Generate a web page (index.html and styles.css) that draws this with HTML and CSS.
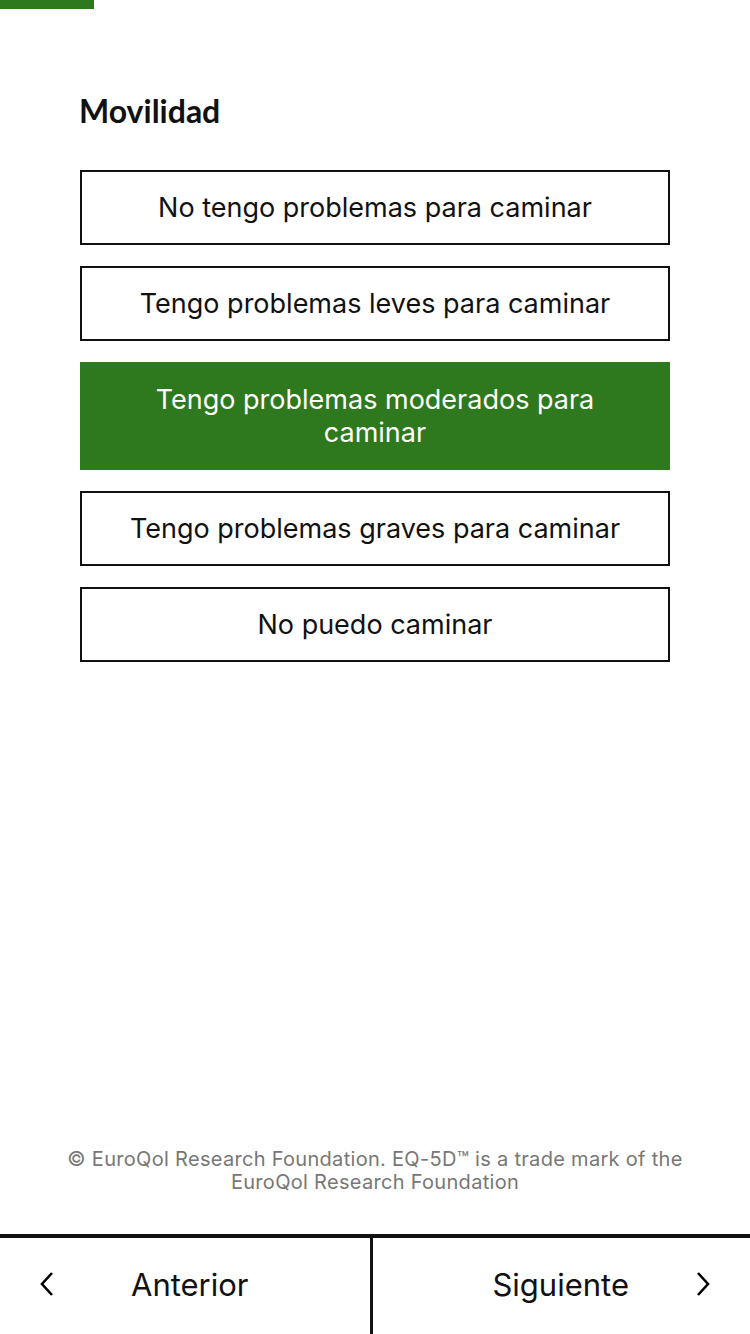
FILE: index.html
```html
<!DOCTYPE html>
<html lang="es">
<head>
    <meta charset="UTF-8">
    <meta name="viewport" content="width=device-width, initial-scale=1.0">
    <title>Movilidad</title>

    <link rel="stylesheet" href="styles.css">
</head>
<body>
    <div class="page">
        <div class="progress"></div>

        <div class="question">
            <h1 class="title">Movilidad</h1>
            <ul class="options">
                <li class="option">No tengo problemas para caminar</li>
                <li class="option">Tengo problemas leves para caminar</li>
                <li class="option selected">Tengo problemas moderados para caminar</li>
                <li class="option">Tengo problemas graves para caminar</li>
                <li class="option">No puedo caminar</li>
            </ul>
        </div>

        <p class="copyright">© EuroQol Research Foundation. EQ-5D™ is a trade mark of the EuroQol Research Foundation</p>

        <nav class="nav">
            <div class="nav-btn prev">
                <svg class="chevron" width="14" height="26" viewBox="0 0 14 26"><path d="M12 2 L2 13 L12 24" fill="none" stroke="#000" stroke-width="2.6"/></svg>
                <span>Anterior</span>
            </div>
            <div class="nav-btn next">
                <span>Siguiente</span>
                <svg class="chevron" width="14" height="26" viewBox="0 0 14 26"><path d="M2 2 L12 13 L2 24" fill="none" stroke="#000" stroke-width="2.6"/></svg>
            </div>
        </nav>
    </div>
</body>
</html>
```

FILE: styles.css
```css
* {
    margin: 0;
    padding: 0;
    box-sizing: border-box;
}

body {
    font-family: Inter, Roboto, "Liberation Sans", sans-serif;
    color: #111;
    background: #fff;
}

.page {
    width: 750px;
    height: 1334px;
    display: flex;
    flex-direction: column;
}

.progress {
    width: 94px;
    height: 9px;
    background-color: #2e781d;
}

.question {
    flex: 1;
    padding: 82px 80px 0 80px;
}

.question .title {
    font-family: Lato, "Liberation Sans", sans-serif;
    font-weight: bold;
    font-size: 32px;
    line-height: 40px;
    margin-left: -1px;
    margin-bottom: 39px;
}

.options {
    list-style: none;
    display: flex;
    flex-direction: column;
    gap: 21px;
}

.options .option {
    border: 2px solid #111;
    min-height: 75px;
    display: flex;
    align-items: center;
    justify-content: center;
    text-align: center;
    font-size: 27px;
    line-height: 33px;
    padding: 19px 22px;
}

.options .selected {
    background-color: #2e781d;
    border-color: #2e781d;
    color: #fff;
}

.copyright {
    text-align: center;
    font-size: 20px;
    line-height: 23px;
    color: #777;
    padding: 0 50px;
    margin-bottom: 40px;
    letter-spacing: 0.3px;
}

.nav {
    height: 100px;
    border-top: 4px solid #111;
    display: flex;
}

.nav .nav-btn {
    display: flex;
    align-items: center;
    font-size: 31px;
    padding-bottom: 4px;
}

.nav .prev {
    width: 373px;
    border-right: 3px solid #111;
    padding-left: 40px;
}

.nav .prev span {
    margin-left: 77px;
}

.nav .next {
    flex: 1;
    justify-content: flex-end;
    padding-right: 40px;
}

.nav .next span {
    margin-right: 67px;
}
```
